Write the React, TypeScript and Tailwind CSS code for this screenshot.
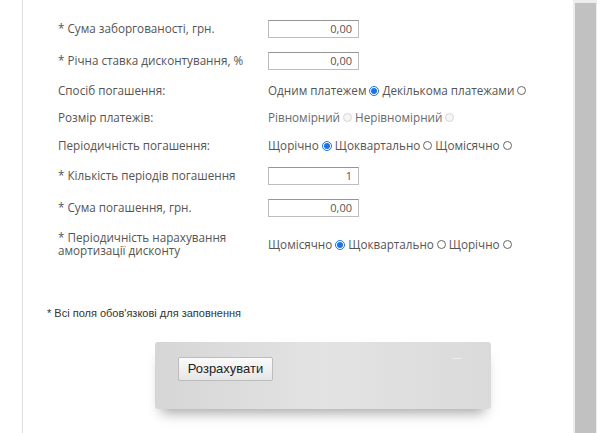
import React from "react";

function Radio({ checked = false, disabled = false }: { checked?: boolean; disabled?: boolean }) {
  if (checked) {
    return (
      <span className="inline-flex items-center justify-center w-[10px] h-[10px] rounded-full border border-[#1a73e8] bg-white mx-[3px] align-middle">
        <span className="w-[6px] h-[6px] rounded-full bg-[#1a73e8]" />
      </span>
    );
  }
  return (
    <span
      className={
        disabled
          ? "inline-block w-[9px] h-[9px] rounded-full border border-[#d6d6d6] bg-[#f6f6f6] mx-[3px] align-middle"
          : "inline-block w-[9px] h-[9px] rounded-full border border-[#666] bg-white mx-[3px] align-middle"
      }
    />
  );
}

function Input({ value }: { value: string }) {
  return (
    <div className="w-[91px] h-[18px] border border-[#bdbdbd] border-t-[#959595] bg-white flex items-center justify-end pr-[6px] text-[11px] text-[#555]">
      {value}
    </div>
  );
}

function Row({ h, label, children }: { h: string; label: React.ReactNode; children: React.ReactNode }) {
  return (
    <div className={"flex items-center " + h}>
      <div className="w-[210px] shrink-0">{label}</div>
      <div className="flex items-center">{children}</div>
    </div>
  );
}

export default function App() {
  return (
    <div
      className="relative w-[600px] h-[433px] bg-white overflow-hidden text-[11.7px] text-[#555]"
      style={{ fontFamily: '"Open Sans", "Liberation Sans", sans-serif' }}
    >
      <div className="flex h-full">
        <div className="w-[22px] shrink-0" />
        <div className="w-px bg-[#dcdcdc] shrink-0" />
        <div className="flex-1 flex flex-col">
          <div className="pt-[13px] pl-[35px]">
            <div className="h-[32px] flex items-center">
              <div className="w-[210px] shrink-0">* Сума заборгованості, грн.</div>
              <Input value="0,00" />
            </div>
            <div className="h-[32px] flex items-center">
              <div className="w-[210px] shrink-0">* Річна ставка дисконтування, %</div>
              <Input value="0,00" />
            </div>
            <Row h="h-[28px]" label="Спосіб погашення:">
              <span>Одним платежем</span>
              <Radio checked />
              <span>Декількома платежами</span>
              <Radio />
            </Row>
            <Row h="h-[26px]" label="Розмір платежів:">
              <span className="text-[#6a6a6a]">Рівномірний</span>
              <Radio disabled />
              <span className="text-[#6a6a6a]">Нерівномірний</span>
              <Radio disabled />
            </Row>
            <Row h="h-[30px]" label="Періодичність погашення:">
              <span>Щорічно</span>
              <Radio checked />
              <span>Щоквартально</span>
              <Radio />
              <span>Щомісячно</span>
              <Radio />
            </Row>
            <div className="h-[30px] flex items-center">
              <div className="w-[210px] shrink-0">* Кількість періодів погашення</div>
              <Input value="1" />
            </div>
            <div className="h-[34px] flex items-center">
              <div className="w-[210px] shrink-0">* Сума погашення, грн.</div>
              <Input value="0,00" />
            </div>
            <div className="h-[40px] flex items-center">
              <div className="w-[210px] shrink-0 leading-[13px] -mt-[2px]">
                <div>* Періодичність нарахування</div>
                <div>амортизації дисконту</div>
              </div>
              <div className="flex items-center">
                <span>Щомісячно</span>
                <Radio checked />
                <span>Щоквартально</span>
                <Radio />
                <span>Щорічно</span>
                <Radio />
              </div>
            </div>
          </div>
          <div
            className="mt-[40px] pl-[24px] text-[11px] text-[#333]"
            style={{ fontFamily: '"Liberation Sans", Arial, sans-serif' }}
          >
            * Всі поля обов'язкові для заповнення
          </div>
          <div className="mt-[20px] pl-[132px]">
            <div className="relative w-[336px] h-[67px] rounded-[3px] bg-gradient-to-r from-[#d6d6d6] via-[#e3e3e3] to-[#dadada] shadow-[0_10px_12px_-6px_rgba(0,0,0,0.35)] pt-[15px] pl-[23px]">
              <div className="absolute right-[29px] top-[16px] w-[10px] h-px bg-[#ececec]" />
              <div
                className="w-[95px] h-[24px] rounded-[2px] border border-[#bcbcbc] bg-gradient-to-b from-[#fbfbfb] to-[#e6e6e6] flex items-center justify-center text-[13px] text-[#222]"
                style={{ fontFamily: '"Liberation Sans", Arial, sans-serif' }}
              >
                Розрахувати
              </div>
            </div>
          </div>
        </div>
        <div className="w-[2px] bg-[#ededed] shrink-0" />
        <div className="w-[21px] shrink-0 flex flex-col">
          <div className="h-[3px] bg-[#ededed]" />
          <div className="flex-1 bg-[#c1c1c1]" />
        </div>
        <div className="w-px bg-[#ededed] shrink-0" />
        <div className="w-[3px] shrink-0" />
      </div>
    </div>
  );
}
